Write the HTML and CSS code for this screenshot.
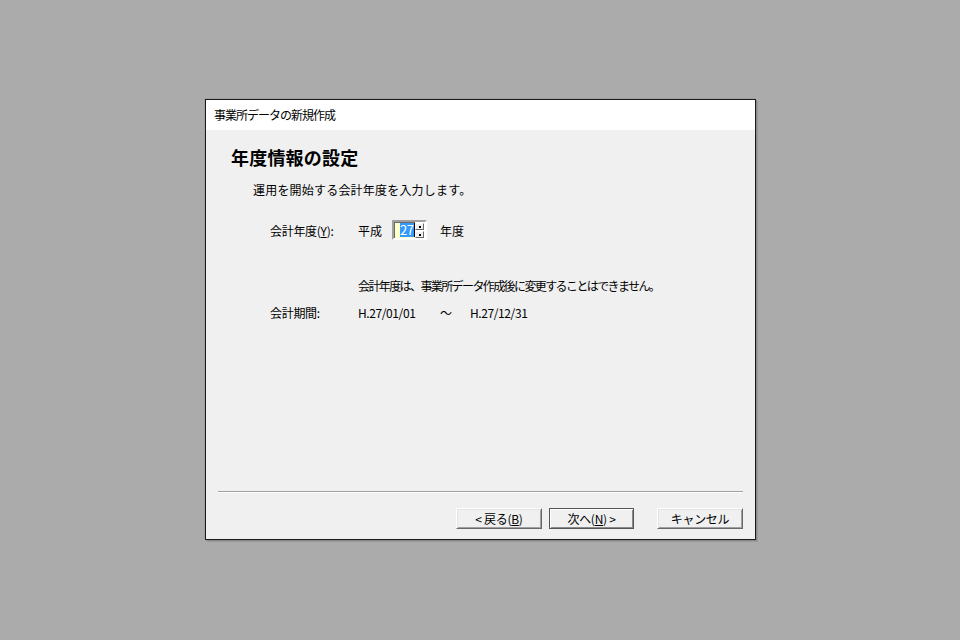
FILE: index.html
```html
<!DOCTYPE html>
<html lang="ja">
<head>
<meta charset="utf-8">
<link rel="stylesheet" href="styles.css">
</head>
<body>
<div class="window">
  <div class="titlebar">事業所データの新規作成</div>
  <div class="content">
    <div class="main">
      <h1 class="heading">年度情報の設定</h1>
      <p class="subtitle">運用を開始する会計年度を入力します。</p>
      <div class="row row-year">
        <span class="label">会計年度(<u>Y</u>):</span>
        <span class="era">平成</span>
        <span class="spin">
          <span class="spin-field"><span class="sel">27</span><span class="caret"></span></span>
          <span class="spin-btns">
            <span class="spin-btn"><i></i></span>
            <span class="spin-btn"><i></i></span>
          </span>
        </span>
        <span class="unit">年度</span>
      </div>
      <p class="note">会計年度は、事業所データ作成後に変更することはできません。</p>
      <div class="row row-period">
        <span class="label">会計期間:</span>
        <span class="date">H.27/01/01</span>
        <span class="tilde">～</span>
        <span class="date">H.27/12/31</span>
      </div>
    </div>
    <div class="footer">
      <div class="separator"></div>
      <div class="buttons">
        <button class="btn">&lt;&nbsp;戻る(<u>B</u>)</button>
        <button class="btn btn-default">次へ(<u>N</u>)&nbsp;&gt;</button>
        <button class="btn btn-cancel">キャンセル</button>
      </div>
    </div>
  </div>
</div>
</body>
</html>
```
FILE: styles.css
```css
html, body {
  margin: 0;
  padding: 0;
}
body {
  background: #ababab;
  width: 960px;
  height: 640px;
  overflow: hidden;
  font-family: "Noto Sans CJK JP", "Noto Sans", sans-serif;
  font-size: 12px;
  color: #000;
}
.window {
  margin: 99px 0 0 205px;
  width: 549px;
  height: 439px;
  border: 1px solid #1a1a1a;
  background: #f0f0f0;
  display: flex;
  flex-direction: column;
  box-shadow: 1px 1px 0 #8a8a8a, 2px 2px 0 #999, -1px -1px 0 #a0a0a0;
}
.titlebar {
  height: 30px;
  background: #fff;
  line-height: 30px;
  padding-left: 8px;
  letter-spacing: -1px;
  white-space: nowrap;
}
.content {
  flex: 1;
  display: flex;
  flex-direction: column;
}
.main {
  flex: 1;
  padding: 15px 0 0 25px;
}
.heading {
  margin: 0;
  font-size: 18px;
  font-weight: bold;
  line-height: 24px;
  letter-spacing: 0.2px;
}
.subtitle {
  margin: 13px 0 0 22px;
  line-height: 16px;
  letter-spacing: 0.2px;
}
.row {
  display: flex;
  align-items: center;
  margin-left: 39px;
  white-space: nowrap;
}
.row-year {
  margin-top: 22px;
  height: 20px;
}
.label {
  width: 88px;
  letter-spacing: -0.3px;
}
.era {
  width: 34px;
}
.spin {
  display: flex;
  width: 31px;
  height: 16px;
  border-top: 2px solid #a0a0a0;
  border-left: 2px solid #a0a0a0;
  border-right: 2px solid #fff;
  border-bottom: 2px solid #fff;
  box-shadow: inset 1px 1px 0 #696969;
  background: #ffffc8;
  margin-right: 13px;
}
.spin-field {
  flex: 1;
  display: flex;
  align-items: center;
  padding-left: 6px;
}
.sel {
  background: #3399ff;
  color: #fff;
  font-size: 13px;
  line-height: 14px;
  letter-spacing: -0.5px;
  padding: 0 1px 0 0;
}
.caret {
  width: 1px;
  height: 14px;
  background: #000;
}
.spin-btns {
  width: 13px;
  display: flex;
  flex-direction: column;
  gap: 1px;
  padding: 1px 1px 0 0;
  background: #fff;
}
.spin-btn {
  flex: 1;
  background: #f0f0f0;
  border-top: 1px solid #fff;
  border-left: 1px solid #fff;
  border-right: 1px solid #696969;
  border-bottom: 1px solid #696969;
  display: flex;
  align-items: center;
  justify-content: center;
}
.spin-btn i {
  width: 2px;
  height: 2px;
  background: #000;
}
.unit {
  width: 40px;
}
.note {
  margin: 38px 0 0 127px;
  line-height: 16px;
  letter-spacing: -1.6px;
  white-space: nowrap;
}
.row-period {
  margin-top: 10px;
  height: 16px;
}
.date {
  width: 82px;
  letter-spacing: -0.4px;
}
.tilde {
  width: 30px;
}
.footer {
  display: flex;
  flex-direction: column;
  padding: 0 12px 10px 12px;
}
.separator {
  height: 0;
  border-top: 1px solid #a0a0a0;
  border-bottom: 1px solid #fff;
}
.buttons {
  display: flex;
  justify-content: flex-end;
  gap: 7px;
  margin-top: 15px;
}
.btn {
  width: 86px;
  height: 21px;
  padding: 0;
  margin: 0;
  font-family: inherit;
  font-size: 12px;
  line-height: 14px;
  color: #000;
  background: #f0f0f0;
  border-top: 1px solid #fff;
  border-left: 1px solid #fff;
  border-right: 1px solid #696969;
  border-bottom: 1px solid #696969;
  box-shadow: 1px 1px 0 #e3e3e3 inset, -1px -1px 0 #a0a0a0 inset;
  letter-spacing: -0.3px;
}
.btn-default {
  width: 85px;
  border: 1px solid #555;
  box-shadow: inset 1px 1px 0 #fff, inset -1px -1px 0 #8a8a8a;
}
.btn-cancel {
  margin-left: 16px;
}
u {
  text-decoration: underline;
  text-underline-offset: 1px;
}
```
